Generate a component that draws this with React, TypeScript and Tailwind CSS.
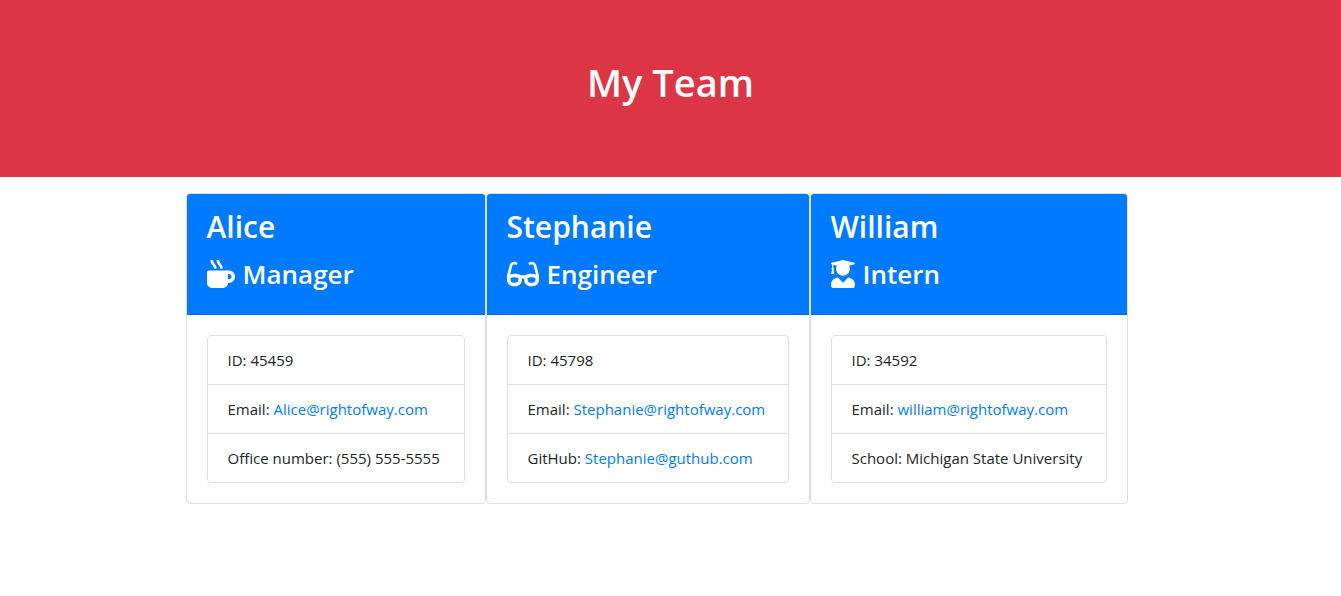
import { FaMugHot, FaGlasses, FaUserGraduate } from "react-icons/fa";
import type { IconType } from "react-icons";

type Item = { label: string; value: string; href?: string };
type Member = {
  name: string;
  role: string;
  Icon: IconType;
  iconWidth: string;
  width: string;
  items: Item[];
};

const team: Member[] = [
  {
    name: "Alice",
    role: "Manager",
    Icon: FaMugHot,
    iconWidth: "w-7",
    width: "w-[300px]",
    items: [
      { label: "ID", value: "45459" },
      { label: "Email", value: "Alice@rightofway.com", href: "mailto:Alice@rightofway.com" },
      { label: "Office number", value: "(555) 555-5555" },
    ],
  },
  {
    name: "Stephanie",
    role: "Engineer",
    Icon: FaGlasses,
    iconWidth: "w-8",
    width: "w-[324px]",
    items: [
      { label: "ID", value: "45798" },
      { label: "Email", value: "Stephanie@rightofway.com", href: "mailto:Stephanie@rightofway.com" },
      { label: "GitHub", value: "Stephanie@guthub.com", href: "https://github.com/Stephanie@guthub.com" },
    ],
  },
  {
    name: "William",
    role: "Intern",
    Icon: FaUserGraduate,
    iconWidth: "w-6",
    width: "w-[318px]",
    items: [
      { label: "ID", value: "34592" },
      { label: "Email", value: "william@rightofway.com", href: "mailto:william@rightofway.com" },
      { label: "School", value: "Michigan State University" },
    ],
  },
];

function MemberCard({ name, role, Icon, iconWidth, width, items }: Member) {
  return (
    <article className={`${width} rounded border border-[#dfdfdf] bg-white`}>
      <header className="rounded-t-[3px] border-b border-[#006cdf] bg-[#007bff] px-5 pt-3 pb-[22px] text-white">
        <h2 className="mb-2 text-[30px] leading-[42px] font-semibold">{name}</h2>
        <h3 className="flex items-center gap-2 text-[26px] leading-9 font-semibold">
          <Icon className={`h-7 shrink-0 ${iconWidth}`} preserveAspectRatio="none" aria-hidden="true" />
          {role}
        </h3>
      </header>
      <div className="p-5">
        <ul className="divide-y divide-[#dfdfdf] rounded border border-[#dfdfdf]">
          {items.map((item) => (
            <li key={item.label} className="px-5 py-3 whitespace-nowrap">
              {item.label}:{" "}
              {item.href ? (
                <a href={item.href} className="text-[#007bff] hover:underline">{item.value}</a>
              ) : (
                item.value
              )}
            </li>
          ))}
        </ul>
      </div>
    </article>
  );
}

export default function App() {
  return (
    <div className="min-h-screen bg-white font-['Open_Sans',sans-serif] text-[15px] leading-6 text-[#212529]">
      <header className="mb-4 bg-[#dc3545] px-8 pt-13 pb-16 text-center text-white">
        <h1 className="text-[38px] leading-[61px] font-semibold">My Team</h1>
      </header>
      <main className="flex flex-wrap justify-center pr-7">
        {team.map((member) => (
          <MemberCard key={member.name} {...member} />
        ))}
      </main>
    </div>
  );
}
